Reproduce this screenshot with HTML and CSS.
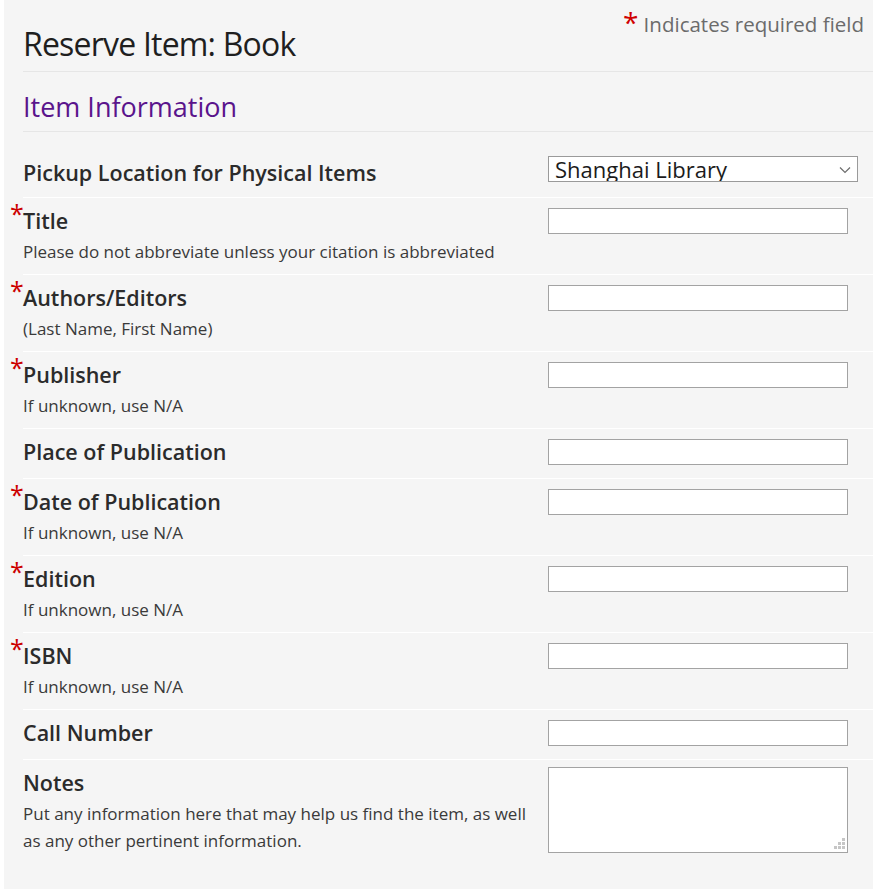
FILE: index.html
```html
<!DOCTYPE html>
<html lang="en">
<head>
<meta charset="utf-8">
<title>Reserve Item: Book</title>
<link rel="stylesheet" href="styles.css">
</head>
<body>
<div class="page">
  <header class="form-head">
    <h1>Reserve Item: Book</h1>
    <p class="req-note"><span class="req-big">*</span> Indicates required field</p>
  </header>
  <section class="fieldset">
    <h2>Item Information</h2>

    <div class="row row-first">
      <div class="label-col"><label class="lbl" for="loc">Pickup Location for Physical Items</label></div>
      <div class="ctrl-col">
        <div class="select-wrap">
          <select id="loc" class="select"><option>Shanghai Library</option></select>
          <svg class="chev" width="12" height="8" viewBox="0 0 12 8"><path d="M1 1.5 L6 6.5 L11 1.5" fill="none" stroke="#6d6d6d" stroke-width="1.2"/></svg>
        </div>
      </div>
    </div>

    <div class="row">
      <div class="label-col"><label class="lbl" for="f1"><span class="req">*</span>Title</label>
        <p class="help">Please do not abbreviate unless your citation is abbreviated</p></div>
      <div class="ctrl-col"><input id="f1" class="inp" type="text"></div>
    </div>

    <div class="row">
      <div class="label-col"><label class="lbl" for="f2"><span class="req">*</span>Authors/Editors</label>
        <p class="help">(Last Name, First Name)</p></div>
      <div class="ctrl-col"><input id="f2" class="inp" type="text"></div>
    </div>

    <div class="row">
      <div class="label-col"><label class="lbl" for="f3"><span class="req">*</span>Publisher</label>
        <p class="help">If unknown, use N/A</p></div>
      <div class="ctrl-col"><input id="f3" class="inp" type="text"></div>
    </div>

    <div class="row">
      <div class="label-col"><label class="lbl" for="f4">Place of Publication</label></div>
      <div class="ctrl-col"><input id="f4" class="inp" type="text"></div>
    </div>

    <div class="row">
      <div class="label-col"><label class="lbl" for="f5"><span class="req">*</span>Date of Publication</label>
        <p class="help">If unknown, use N/A</p></div>
      <div class="ctrl-col"><input id="f5" class="inp" type="text"></div>
    </div>

    <div class="row">
      <div class="label-col"><label class="lbl" for="f6"><span class="req">*</span>Edition</label>
        <p class="help">If unknown, use N/A</p></div>
      <div class="ctrl-col"><input id="f6" class="inp" type="text"></div>
    </div>

    <div class="row">
      <div class="label-col"><label class="lbl" for="f7"><span class="req">*</span>ISBN</label>
        <p class="help">If unknown, use N/A</p></div>
      <div class="ctrl-col"><input id="f7" class="inp" type="text"></div>
    </div>

    <div class="row">
      <div class="label-col"><label class="lbl" for="f8">Call Number</label></div>
      <div class="ctrl-col"><input id="f8" class="inp" type="text"></div>
    </div>

    <div class="row row-last">
      <div class="label-col"><label class="lbl" for="f9">Notes</label>
        <p class="help">Put any information here that may help us find the item, as well as any other pertinent information.</p></div>
      <div class="ctrl-col">
        <div class="ta-wrap">
          <textarea id="f9" class="ta"></textarea>
          <svg class="grip" width="11" height="11" viewBox="0 0 11 11">
            <rect x="8" y="0" width="3" height="3" fill="#c6c6c6"/>
            <rect x="4" y="4" width="3" height="3" fill="#c6c6c6"/>
            <rect x="8" y="4" width="3" height="3" fill="#c6c6c6"/>
            <rect x="0" y="8" width="3" height="3" fill="#c6c6c6"/>
            <rect x="4" y="8" width="3" height="3" fill="#c6c6c6"/>
            <rect x="8" y="8" width="3" height="3" fill="#c6c6c6"/>
          </svg>
        </div>
      </div>
    </div>
  </section>
</div>
</body>
</html>
```
FILE: styles.css
```css
* { box-sizing: border-box; }
html, body { margin: 0; padding: 0; background: #fff; }
body { font-family: "Open Sans", "Liberation Sans", sans-serif; color: #2d2d2d; }

.page {
  margin: 0 2px 0 4px;
  background: #f5f5f5;
  padding: 1px 0 40px 19px;
  min-height: 889px;
}

.form-head {
  display: flex;
  justify-content: space-between;
  align-items: flex-start;
  border-bottom: 1px solid #e6e6e6;
  padding-right: 9px;
}
.form-head h1 {
  margin: 23px 0 0 0;
  font-size: 32px;
  line-height: 40px;
  font-weight: 400;
  color: #1f1f1f;
  padding-bottom: 7px;
  letter-spacing: -0.8px;
}
.req-note {
  margin: 11px 0 0 0;
  font-size: 20.5px;
  line-height: 24px;
  color: #6b6b6b;
}
.req-big {
  color: #d00000;
  font-size: 28px;
  vertical-align: top;
  line-height: 20px;
}

.fieldset h2 {
  margin: 17px 0 0 0;
  font-size: 27px;
  line-height: 36px;
  font-weight: 400;
  color: #5a148c;
  padding-bottom: 6px;
  border-bottom: 1px solid #e6e6e6;
}

.row {
  display: grid;
  grid-template-columns: 1fr 325px;
  padding: 10px 0 9px 0;
  border-bottom: 1px solid #ffffff;
}
.row-first { padding-top: 28px; padding-bottom: 7px; }
.row-first .ctrl-col { margin-top: -4px; }
.row-last { border-bottom: 0; }

.label-col { padding-right: 8px; }
.lbl {
  display: block;
  font-size: 21.5px;
  line-height: 26px;
  font-weight: 600;
  color: #2b2b2b;
  margin-bottom: 4px;
}
.req {
  color: #cc0000;
  font-size: 25px;
  line-height: 10px;
  margin-left: -13px;
  display: inline-block;
  width: 13px;
  vertical-align: 6px;
  font-weight: 400;
}
.help {
  margin: 0;
  font-size: 17px;
  line-height: 27px;
  color: #3a3a3a;
}

.inp {
  display: block;
  width: 300px;
  height: 26px;
  border: 1px solid #a3a3a3;
  background: #fff;
  margin: 0;
  padding: 0 4px;
  font: inherit;
}

.select-wrap { position: relative; width: 310px; }
.select {
  appearance: none;
  -webkit-appearance: none;
  display: block;
  width: 310px;
  height: 26px;
  border: 1px solid #9a9a9a;
  border-radius: 0;
  background: #fff;
  margin: 0;
  padding: 0 24px 0 6px;
  font-family: "Open Sans", "Liberation Sans", sans-serif;
  font-size: 22px;
  line-height: 24px;
  color: #1b1b1b;
}
.chev { position: absolute; right: 7px; top: 10px; }

.ta-wrap { position: relative; width: 300px; margin-top: -3px; }
.ta {
  display: block;
  width: 300px;
  height: 86px;
  border: 1px solid #a3a3a3;
  background: #fff;
  margin: 0;
  resize: none;
  font: inherit;
}
.grip { position: absolute; right: 3px; bottom: 4px; }
```
